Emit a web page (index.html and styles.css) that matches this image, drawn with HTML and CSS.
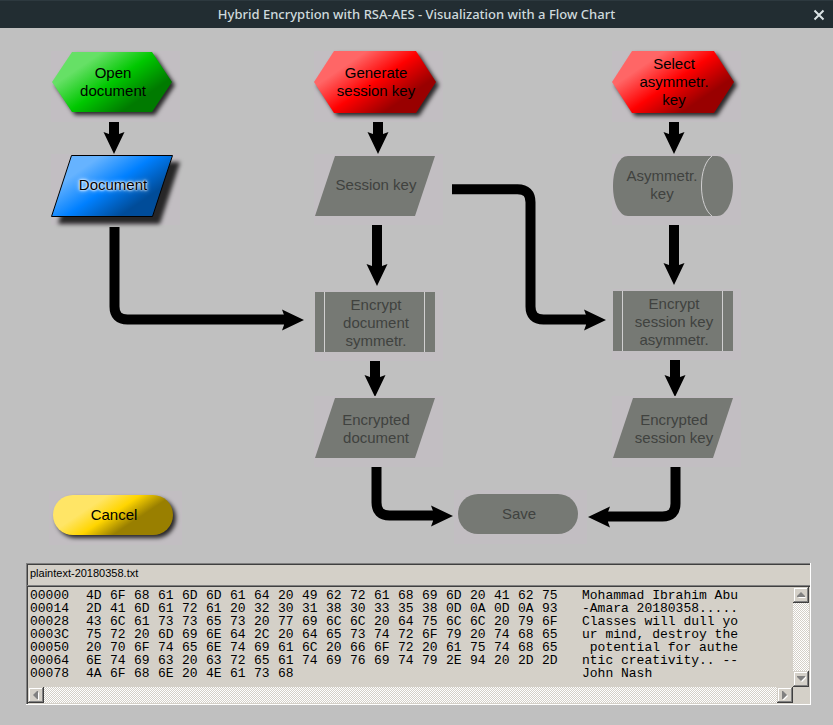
FILE: index.html
```html
<!DOCTYPE html>
<html lang="en">
<head>
<meta charset="utf-8">
<title>Hybrid Encryption with RSA-AES - Visualization with a Flow Chart</title>
<link rel="stylesheet" href="styles.css">
</head>
<body>
<header class="titlebar">
  <h1 class="title">Hybrid Encryption with RSA-AES - Visualization with a Flow Chart</h1>
  <button class="close" type="button" aria-label="Close"><svg width="12" height="12" viewBox="0 0 12 12"><path d="M1.500 1.500 10.500 10.500M10.500 1.500 1.500 10.500" stroke="#dbe3e5" stroke-width="2" fill="none"/></svg></button>
</header>

<main>
<section class="chart" aria-label="Flow chart">
  <svg class="links" width="833" height="535" viewBox="0 28 833 535" aria-hidden="true">
    <defs>
      <linearGradient id="green" gradientUnits="userSpaceOnUse" x1="16" y1="25" x2="50" y2="75"><stop offset="0" stop-color="#66e066"/><stop offset=".5" stop-color="#00c800"/><stop offset="1" stop-color="#007a00"/></linearGradient>
      <linearGradient id="red" gradientUnits="userSpaceOnUse" x1="16" y1="25" x2="50" y2="75"><stop offset="0" stop-color="#ff6666"/><stop offset=".5" stop-color="#ff0000"/><stop offset="1" stop-color="#990000"/></linearGradient>
      <linearGradient id="blue" gradientUnits="userSpaceOnUse" x1="16" y1="25" x2="50" y2="75"><stop offset="0" stop-color="#66b3ff"/><stop offset=".5" stop-color="#0080ff"/><stop offset="1" stop-color="#004c99"/></linearGradient>
      <linearGradient id="yellow" gradientUnits="userSpaceOnUse" x1="20" y1="30" x2="40" y2="60"><stop offset="0" stop-color="#ffe566"/><stop offset=".5" stop-color="#ffd500"/><stop offset="1" stop-color="#997f00"/></linearGradient>
      <path id="head" d="M0 0 -10.5 -22 -5 -20H5L10.5 -22Z"/>
    </defs>
    <g class="shafts">
      <path d="M114 121V136M378 121V136M674 121V136M377 225V268M674 225V268M375 361V378M675 360V378"/>
      <path d="M114.500 227V306.500Q114.500 319.500 127.500 319.500H286"/>
      <path d="M452 189.200H517.500Q530.500 189.200 530.500 202.200V306.500Q530.500 319.500 543.500 319.500H588"/>
      <path d="M376.500 467V502.500Q376.500 515.500 389.500 515.500H436"/>
      <path d="M675.500 467V503.500Q675.500 516.500 662.500 516.500H605"/>
    </g>
    <use href="#head" transform="translate(114 154)"/>
    <use href="#head" transform="translate(378 154)"/>
    <use href="#head" transform="translate(674 154)"/>
    <use href="#head" transform="translate(377 286)"/>
    <use href="#head" transform="translate(674 285)"/>
    <use href="#head" transform="translate(375 397)"/>
    <use href="#head" transform="translate(675 397)"/>
    <use href="#head" transform="translate(304 320) rotate(-90)"/>
    <use href="#head" transform="translate(606 320) rotate(-90)"/>
    <use href="#head" transform="translate(453 516) rotate(-90)"/>
    <use href="#head" transform="translate(588 517) rotate(90)"/>
  </svg>

  <button type="button" class="node open-document"><svg class="shape lifted"><path fill="url(#green)" d="M21 1H101L121 31 101 61H21L1 31Z"/></svg><span class="label">Open<br>document</span></button>
  <button type="button" class="node generate-key"><svg class="shape lifted"><path fill="url(#red)" d="M20 0H102L122 31 102 62H20L0 31Z"/></svg><span class="label">Generate<br>session key</span></button>
  <button type="button" class="node select-key"><svg class="shape lifted"><path fill="url(#red)" d="M20 0H102L122 31 102 62H20L0 31Z"/></svg><span class="label">Select<br>asymmetr.<br>key</span></button>

  <button type="button" class="node document"><svg class="shape raised"><path fill="url(#blue)" stroke="#000" d="M20.500 1.500H121.500L101.500 62.500H.5Z"/></svg><span class="label glow">Document</span></button>
  <button type="button" class="node session-key" disabled><svg class="shape"><path d="M21 2H121L101 62H1Z"/></svg><span class="label">Session key</span></button>
  <button type="button" class="node asymmetric-key" disabled><svg class="shape"><path d="M16 2H105C114 2 121 15.500 121 32S114 62 105 62H16C7 62 1 48.500 1 32S7 2 16 2Z"/><path class="seam" d="M100 2C93.500 7 89.500 18 89.500 32S93.500 57 100 62"/></svg><span class="label body">Asymmetr.<br>key</span></button>

  <button type="button" class="node process encrypt-document" disabled><svg class="shape"><path d="M1 2H121V62H1Z"/><path class="seam" d="M10.500 2V62M110.500 2V62"/></svg><span class="label">Encrypt<br>document<br>symmetr.</span></button>
  <button type="button" class="node process encrypt-key" disabled><svg class="shape"><path d="M1 2H121V62H1Z"/><path class="seam" d="M10.500 2V62M110.500 2V62"/></svg><span class="label">Encrypt<br>session key<br>asymmetr.</span></button>

  <button type="button" class="node process encrypted-document" disabled><svg class="shape"><path d="M21 2H121L101 62H1Z"/></svg><span class="label">Encrypted<br>document</span></button>
  <button type="button" class="node process encrypted-key" disabled><svg class="shape"><path d="M21 2H121L101 62H1Z"/></svg><span class="label">Encrypted<br>session key</span></button>

  <button type="button" class="node pill cancel"><svg class="shape lifted"><rect fill="url(#yellow)" x="4" y="4" width="120" height="40" rx="20"/></svg><span class="label">Cancel</span></button>
  <button type="button" class="node pill save" disabled><svg class="shape"><rect x="4" y="4" width="120" height="40" rx="20"/></svg><span class="label">Save</span></button>
</section>

<section class="viewer" aria-label="File contents">
  <input class="filename" type="text" value="plaintext-20180358.txt" aria-label="File name" readonly>
  <div class="hexbox">
    <div class="hexpane">
      <table class="hex">
        <tr><th>00000<td>4D<td>6F<td>68<td>61<td>6D<td>6D<td>61<td>64<td>20<td>49<td>62<td>72<td>61<td>68<td>69<td>6D<td>20<td>41<td>62<td>75<td class="text">Mohammad Ibrahim Abu</td></tr>
        <tr><th>00014<td>2D<td>41<td>6D<td>61<td>72<td>61<td>20<td>32<td>30<td>31<td>38<td>30<td>33<td>35<td>38<td>0D<td>0A<td>0D<td>0A<td>93<td class="text">-Amara 20180358.....</td></tr>
        <tr><th>00028<td>43<td>6C<td>61<td>73<td>73<td>65<td>73<td>20<td>77<td>69<td>6C<td>6C<td>20<td>64<td>75<td>6C<td>6C<td>20<td>79<td>6F<td class="text">Classes will dull yo</td></tr>
        <tr><th>0003C<td>75<td>72<td>20<td>6D<td>69<td>6E<td>64<td>2C<td>20<td>64<td>65<td>73<td>74<td>72<td>6F<td>79<td>20<td>74<td>68<td>65<td class="text">ur mind, destroy the</td></tr>
        <tr><th>00050<td>20<td>70<td>6F<td>74<td>65<td>6E<td>74<td>69<td>61<td>6C<td>20<td>66<td>6F<td>72<td>20<td>61<td>75<td>74<td>68<td>65<td class="text"> potential for authe</td></tr>
        <tr><th>00064<td>6E<td>74<td>69<td>63<td>20<td>63<td>72<td>65<td>61<td>74<td>69<td>76<td>69<td>74<td>79<td>2E<td>94<td>20<td>2D<td>2D<td class="text">ntic creativity.. --</td></tr>
        <tr><th>00078<td>4A<td>6F<td>68<td>6E<td>20<td>4E<td>61<td>73<td>68<td colspan="11"><td class="text">John Nash</td></tr>
      </table>
    </div>
    <div class="scroll vertical">
      <button type="button" class="step" aria-label="Scroll up"><svg width="9" height="6" viewBox="0 0 9 6"><path fill="#fff" d="M1 5H9L8 6H2Z"/><path fill="#808080" d="M4 0 8 4V5H0V4Z"/></svg></button>
      <button type="button" class="step" aria-label="Scroll down"><svg width="9" height="6" viewBox="0 0 9 6"><path fill="#fff" d="M8 1H9V2L5 6 4 5Z"/><path fill="#808080" d="M0 0H8V1L4 5 0 1Z"/></svg></button>
    </div>
    <div class="scroll horizontal">
      <button type="button" class="step" aria-label="Scroll left"><svg width="6" height="9" viewBox="0 0 6 9"><path fill="#fff" d="M5 1 6 2V9H5Z"/><path fill="#808080" d="M0 4 4 0H5V8H4Z"/></svg></button>
      <button type="button" class="step" aria-label="Scroll right"><svg width="6" height="9" viewBox="0 0 6 9"><path fill="#fff" d="M1 8 5 4 6 5 2 9H1Z"/><path fill="#808080" d="M0 0H1L5 4 1 8H0Z"/></svg></button>
    </div>
  </div>
</section>
</main>
</body>
</html>
```
FILE: styles.css
```css
* { box-sizing: border-box; }

body {
  margin: 0;
  background: #c0c0c0;
  font-family: "Liberation Sans", Arial, sans-serif;
}

button {
  padding: 0;
  border: 0;
  background: none;
  font: inherit;
  color: inherit;
}

/* Title bar */
.titlebar {
  display: grid;
  grid-template-columns: 28px 1fr 28px;
  align-items: center;
  height: 28px;
  background: #222d32;
  border-top: 1px solid #2d393f;
}
.title {
  grid-column: 2;
  margin: 0;
  font: 500 13px/27px "Noto Sans", "Open Sans", sans-serif;
  color: #cfdadd;
  text-align: center;
  white-space: nowrap;
}
.close {
  display: flex;
  justify-content: center;
}

/* Flow chart canvas */
.chart {
  position: relative;
  height: 535px;
  overflow: hidden;
}
.links {
  position: absolute;
  left: 0;
  top: 0;
}
.shafts {
  fill: none;
  stroke: #000;
  stroke-width: 10px;
}
.node {
  position: absolute;
  width: 129px;
  height: 71px;
  background: #c2bec2;
  color: #000;
  font-size: 15px;
  line-height: 18px;
}
.node:disabled { color: #40423f; }
.shape {
  position: absolute;
  left: 0;
  top: 0;
  width: 100%;
  height: 100%;
  overflow: visible;
  fill: #767974;
}
.lifted { filter: drop-shadow(3px 3px 2px #000c); }
.raised { filter: drop-shadow(7px 7px 2px #000c); }
.seam {
  fill: none;
  stroke: #d0cfd0;
}
.label {
  position: absolute;
  left: 0;
  top: 0;
  display: grid;
  align-content: center;
  width: 124px;
  height: 62px;
  text-align: center;
  white-space: nowrap;
}
.process .label { height: 66px; }
.label.body { width: 100px; }
.glow { text-shadow: 0 0 2px #fff, 0 0 3px #fff, 0 0 5px #fff; }
.pill {
  width: 133px;
  height: 54px;
}
.pill .label {
  width: 130px;
  height: 48px;
}

.open-document { left: 51px; top: 23px; }
.generate-key { left: 314px; top: 23px; }
.select-key { left: 612px; top: 23px; }
.document { left: 51px; top: 126px; }
.session-key { left: 314px; top: 126px; }
.asymmetric-key { left: 612px; top: 126px; }
.encrypt-document { left: 314px; top: 262px; }
.encrypt-key { left: 612px; top: 261px; }
.encrypted-document { left: 314px; top: 368px; }
.encrypted-key { left: 612px; top: 368px; }
.cancel { left: 49px; top: 463px; }
.save { left: 454px; top: 462px; }

/* File viewer */
.viewer { margin: 0 22px 20px 26px; }
.filename {
  display: block;
  width: 100%;
  height: 22px;
  margin: 0;
  padding: 0 4px 2px;
  border: 0;
  border-right: 1px solid #fff;
  background: #d4d0c8;
  box-shadow: inset 1px 1px #808080, inset 2px 2px #404040;
  font: 11px/18px "Liberation Sans", Arial, sans-serif;
  color: #000;
  outline: 0;
}
.hexbox {
  display: grid;
  grid-template-columns: minmax(0, 1fr) 16px;
  grid-template-rows: auto 16px;
  padding: 2px;
  background: #d4d0c8;
  box-shadow: inset -1px -1px #fff, inset 1px 1px #808080, inset 2px 2px #404040, inset -2px -2px #d4d0c8;
}
.hexpane {
  overflow: hidden;
  padding: 2px 2px 7px;
}
.hex {
  border-collapse: collapse;
  font: 13px/13px "Liberation Mono", "Courier New", monospace;
  color: #000;
}
.hex th,
.hex td {
  min-width: 24px;
  height: 13px;
  padding: 0;
  font-weight: normal;
  text-align: left;
  white-space: pre;
}
.hex th { min-width: 56px; }
.hex .text { padding-left: 16px; }
.scroll {
  display: flex;
  justify-content: space-between;
  background: repeating-conic-gradient(#fff 0 25%, #d4d0c8 0 50%) 0 0 / 2px 2px;
}
.vertical { flex-direction: column; }
.step {
  display: grid;
  flex: none;
  place-content: center;
  width: 16px;
  height: 16px;
  background: #d4d0c8;
  box-shadow: inset -1px -1px #404040, inset 1px 1px #d4d0c8, inset -2px -2px #808080, inset 2px 2px #fff;
}
```
